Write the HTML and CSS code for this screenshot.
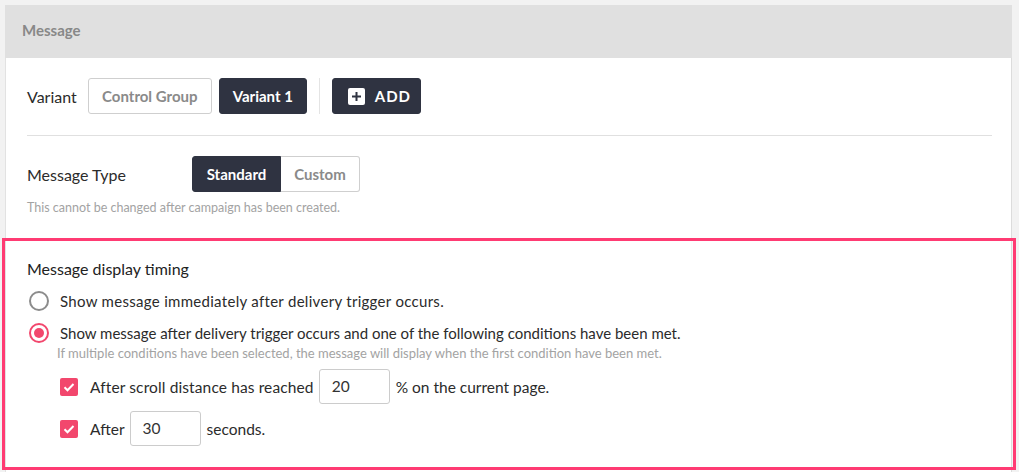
FILE: index.html
```html
<!DOCTYPE html>
<html>
<head>
<meta charset="utf-8">
<link rel="stylesheet" href="styles.css">
</head>
<body>
<div class="card">
  <div class="card-header">Message</div>
  <div class="card-body">
    <div class="row variant-row">
      <span class="label">Variant</span>
      <button class="btn btn-outline btn-control">Control Group</button>
      <button class="btn btn-dark btn-variant">Variant 1</button>
      <span class="vdivider"></span>
      <button class="btn btn-dark btn-add">
        <svg class="plus" width="17" height="17" viewBox="0 0 17 17"><rect x="0" y="0" width="17" height="17" rx="2" fill="#fff"/><path d="M8.5 4v9M4 8.5h9" stroke="#2f3341" stroke-width="2"/></svg>
        <span>ADD</span>
      </button>
    </div>
    <div class="hdivider"></div>
    <div class="row type-row">
      <span class="label label-type">Message Type</span>
      <div class="segmented">
        <button class="seg seg-active">Standard</button>
        <button class="seg seg-inactive">Custom</button>
      </div>
    </div>
    <p class="hint hint-type">This cannot be changed after campaign has been created.</p>
    <div class="timing">
      <div class="timing-title">Message display timing</div>
      <label class="radio-row">
        <span class="radio"></span>
        <span class="radio-text-wide">Show message immediately after delivery trigger occurs.</span>
      </label>
      <label class="radio-row">
        <span class="radio radio-checked"></span>
        <span>Show message after delivery trigger occurs and one of the following conditions have been met.</span>
      </label>
      <p class="hint hint-cond">If multiple conditions have been selected, the message will display when the first condition have been met.</p>
      <div class="check-row">
        <span class="checkbox"><svg width="18" height="18" viewBox="0 0 18 18"><path d="M4.5 9.2l3 3 6-6.2" fill="none" stroke="#fff" stroke-width="2"/></svg></span>
        <span class="check-text check-text-wide">After scroll distance has reached</span>
        <span class="num-input">20</span>
        <span>% on the current page.</span>
      </div>
      <div class="check-row check-row-2">
        <span class="checkbox"><svg width="18" height="18" viewBox="0 0 18 18"><path d="M4.5 9.2l3 3 6-6.2" fill="none" stroke="#fff" stroke-width="2"/></svg></span>
        <span class="check-text">After</span>
        <span class="num-input">30</span>
        <span>seconds.</span>
      </div>
    </div>
  </div>
</div>
</body>
</html>
```

FILE: styles.css
```css
* { box-sizing: border-box; }
html, body { margin: 0; padding: 0; }
body {
  background: #f2f2f2;
  font-family: Lato, "Open Sans", "Liberation Sans", sans-serif;
  font-size: 15px;
  color: #333;
  padding: 5px 0 0 5px;
  height: 472px;
  overflow: hidden;
}
.card {
  width: 1007px;
  background: #fff;
  border-left: 1px solid #e2e2e2;
  border-right: 1px solid #dcdcdc;
  min-height: 480px;
}
.card-header {
  background: #e0e0e0;
  height: 53px;
  margin: 0 -1px;
  padding-left: 17px;
  line-height: 51px;
  font-weight: 700;
  color: #888;
  font-size: 15px;
}
.card-body {
  padding: 20px 19px 0 21px;
}
.row {
  display: flex;
  align-items: center;
  height: 36px;
}
.label { color: #2b2b2b; margin-right: 11px; font-size: 16px; }
.label-type { width: 165px; margin-right: 0; }
.btn {
  height: 36px;
  border-radius: 3px;
  font-family: inherit;
  font-size: 15px;
  font-weight: 700;
  padding: 0;
  display: inline-flex;
  align-items: center;
  justify-content: center;
}
.btn-outline { background: #fff; border: 1px solid #cfcfcf; color: #8a8a8a; }
.btn-dark { background: #2f3341; border: 1px solid #2f3341; color: #fff; }
.btn-control { width: 124px; }
.btn-variant { width: 88px; margin-left: 7px; }
.vdivider { width: 1px; height: 36px; background: #e4e4e4; margin: 0 12px 0 12px; }
.btn-add { width: 89px; gap: 10px; letter-spacing: 1px; justify-content: flex-start; padding-left: 15px; }
.btn-add .plus { display: block; }
.hdivider { height: 1px; background: #e0e0e0; margin: 21px 0 20px; }
.segmented { display: flex; }
.seg {
  height: 36px;
  font-family: inherit;
  font-size: 15px;
  font-weight: 700;
  padding: 0;
}
.seg-active { width: 89px; background: #2f3341; color: #fff; border: 1px solid #2f3341; border-radius: 3px 0 0 3px; }
.seg-inactive { width: 79px; background: #fff; color: #8a8a8a; border: 1px solid #cfcfcf; border-left: none; border-radius: 0 3px 3px 0; }
.hint { font-size: 13px; color: #a3a3a3; margin: 0; line-height: 16px; }
.hint-type { margin-top: 8px; font-size: 12.5px; }
.timing {
  margin: 22px -24px 0 -25px;
  border: 3px solid #ff3b73;
  padding: 18px 20px 21px 22px;
  height: 232px;
}
.timing-title { line-height: 20px; color: #222; font-size: 16px; }
.radio-row {
  display: flex;
  align-items: center;
  height: 24px;
  gap: 11px;
  margin-top: 10px;
  padding-left: 2px;
  color: #2b2b2b;
}
.radio-row + .radio-row { margin-top: 8px; }
.radio-text-wide { letter-spacing: 0.3px; }
.radio {
  width: 20px; height: 20px;
  border: 2px solid #8c8c8c;
  border-radius: 50%;
  display: inline-flex;
  align-items: center;
  justify-content: center;
  flex: none;
}
.radio-checked { border-color: #f2476d; }
.radio-checked::after {
  content: "";
  width: 10px; height: 10px;
  border-radius: 50%;
  background: #f2476d;
}
.hint-cond { padding-left: 30px; }
.check-row {
  display: flex;
  align-items: center;
  height: 35px;
  margin-top: 8px;
  padding-left: 33px;
  color: #2b2b2b;
  font-size: 15.5px;
}
.check-row-2 { margin-top: 7px; }
.check-text-wide { letter-spacing: 0.12px; }
.checkbox {
  width: 18px; height: 18px;
  background: #f2476d;
  border-radius: 2px;
  margin-right: 12px;
  display: inline-block;
  flex: none;
}
.checkbox svg { display: block; }
.num-input {
  width: 71px; height: 35px;
  border: 1px solid #cccccc;
  border-radius: 3px;
  margin: 0 6px 0 5px;
  padding-left: 12px;
  line-height: 33px;
  color: #333;
}
```
